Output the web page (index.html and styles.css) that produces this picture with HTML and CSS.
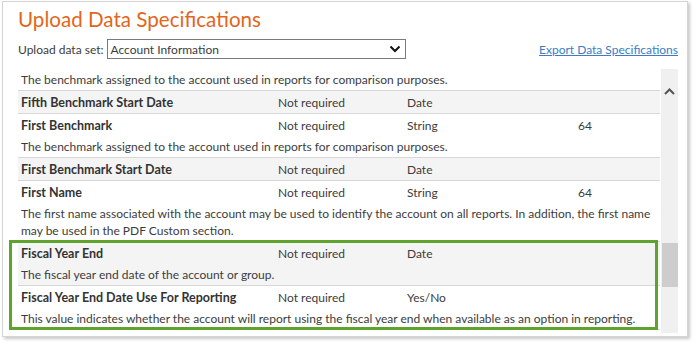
FILE: index.html
```html
<html>
<head>
<title>Upload Data Specifications</title>
  <link rel="stylesheet" href="styles.css">
</head>

<body>
<div class="panel">
  <h1 class="title">Upload Data Specifications</h1>

  <div class="toolbar">
    <span class="label">Upload data set:</span>
    <div class="select">
      <span>Account Information</span>
      <svg width="12" height="8" viewBox="0 0 12 8"><path d="M1.5 1.5 L6 6 L10.5 1.5" fill="none" stroke="#111" stroke-width="2"/></svg>
    </div>
    <a class="export" href="#">Export Data Specifications</a>
  </div>

  <div class="grid-wrap">
    <div class="spec-list">
      <!-- partial item, scrolled up -->
      <div class="item">
        <div class="desc">The benchmark assigned to the account used in reports for comparison purposes.</div>
      </div>
      <div class="item alt">
        <div class="row"><b>Fifth Benchmark Start Date</b><span>Not required</span><span>Date</span><span></span></div>
      </div>
      <div class="item">
        <div class="row"><b>First Benchmark</b><span>Not required</span><span>String</span><span>64</span></div>
        <div class="desc">The benchmark assigned to the account used in reports for comparison purposes.</div>
      </div>
      <div class="item alt">
        <div class="row"><b>First Benchmark Start Date</b><span>Not required</span><span>Date</span><span></span></div>
      </div>
      <div class="item">
        <div class="row"><b>First Name</b><span>Not required</span><span>String</span><span>64</span></div>
        <div class="desc">The first name associated with the account may be used to identify the account on all reports. In addition, the first name may be used in the PDF Custom section.</div>
      </div>
      <div class="callout">
        <div class="item alt">
          <div class="row"><b>Fiscal Year End</b><span>Not required</span><span>Date</span><span></span></div>
          <div class="desc">The fiscal year end date of the account or group.</div>
        </div>
        <div class="item">
          <div class="row"><b>Fiscal Year End Date Use For Reporting</b><span>Not required</span><span>Yes/No</span><span></span></div>
          <div class="desc">This value indicates whether the account will report using the fiscal year end when available as an option in reporting.</div>
        </div>
      </div>
    </div>

    <div class="scrollbar">
      <svg class="arrow" width="11" height="7" viewBox="0 0 11 7"><path d="M1 6 L5.5 1.5 L10 6" fill="none" stroke="#555" stroke-width="2"/></svg>
      <div class="thumb"></div>
    </div>
  </div>
</div>
</body>
</html>
```

FILE: styles.css
```css
body{
  margin: 0;
  font-family: Lato, "Liberation Sans", sans-serif;
  font-size: 12px;
  color: #3c3c3c;
}

.panel{
  margin: 1px 0 0 2px;
  width: 686px;
  height: 336px;
  box-sizing: border-box;
  border: 1px solid #d4d4d4;
  box-shadow: 2px 2px 3px rgba(0,0,0,0.22);
  padding: 4px 9px 0 15px;
  background: #fff;
}

.title{
  margin: 0;
  font-size: 20.6px;
  font-weight: 400;
  line-height: 27px;
  color: #e2661c;
}

.toolbar{
  display: flex;
  align-items: center;
  margin-top: 6px;
  height: 20px;
}

.label{
  margin-right: 3px;
}

.select{
  display: flex;
  align-items: center;
  justify-content: space-between;
  width: 299px;
  height: 20px;
  box-sizing: border-box;
  border: 1px solid #7a7a7a;
  padding: 0 4px 0 3px;
}

.export{
  margin-left: auto;
  color: #3b7dc4;
  text-decoration: underline;
}

.grid-wrap{
  display: flex;
  gap: 1px;
  margin-top: 10px;
}

.spec-list{
  width: 642px;
}

.item{
  border-bottom: 1px solid #d8d8d8;
}

.item.alt{
  background: #f4f4f4;
}

.row{
  display: grid;
  grid-template-columns: 257px 129px 171px 1fr;
  height: 22px;
  align-items: center;
  padding-left: 3px;
}

.row b{
  font-weight: bold;
  font-size: 12.5px;
  color: #333;
}

.desc{
  line-height: 17px;
  padding: 2px 6px 2px 3px;
}

.callout{
  position: relative;
}

.callout::after{
  content: "";
  position: absolute;
  top: -2px;
  left: -9px;
  right: 2px;
  bottom: 0;
  border: 3px solid #5fa32c;
  pointer-events: none;
}

.scrollbar{
  width: 17px;
  height: 264px;
  background: #f0f0f0;
  position: relative;
}

.arrow{
  display: block;
  margin: 19px auto 0;
}

.thumb{
  position: absolute;
  left: 1px;
  right: 0;
  top: 174px;
  height: 44px;
  background: #cdcdcd;
}
```
